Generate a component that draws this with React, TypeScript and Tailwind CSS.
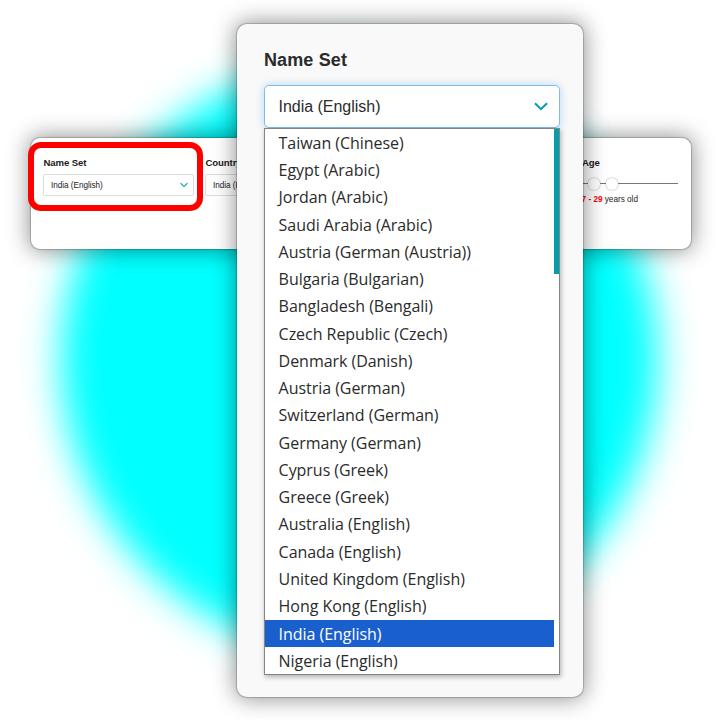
import React from "react";

const OPTIONS = [
  "Taiwan (Chinese)",
  "Egypt (Arabic)",
  "Jordan (Arabic)",
  "Saudi Arabia (Arabic)",
  "Austria (German (Austria))",
  "Bulgaria (Bulgarian)",
  "Bangladesh (Bengali)",
  "Czech Republic (Czech)",
  "Denmark (Danish)",
  "Austria (German)",
  "Switzerland (German)",
  "Germany (German)",
  "Cyprus (Greek)",
  "Greece (Greek)",
  "Australia (English)",
  "Canada (English)",
  "United Kingdom (English)",
  "Hong Kong (English)",
  "India (English)",
  "Nigeria (English)",
];

const SELECTED = "India (English)";

function Chevron({ className }: { className: string }) {
  return (
    <svg viewBox="0 0 14 9" className={className} fill="none" stroke="#009fae" strokeWidth="2">
      <path d="M1 1.2 L7 7.2 L13 1.2" />
    </svg>
  );
}

function SmallSelect({ label, value }: { label: string; value: string }) {
  return (
    <div className="w-[151px] shrink-0">
      <div className="h-[12px] whitespace-nowrap pl-[0.5px] text-[9.6px] font-bold leading-[13px] tracking-[-0.1px] text-[#222]">{label}</div>
      <div className="mt-[6px] flex h-[22px] items-center justify-between rounded-[2px] border border-[#dcdcdc] bg-white pr-[5px] pl-[7px]">
        <span className="whitespace-nowrap pt-px text-[8.2px] leading-[10px] tracking-[-0.04px] text-[#222]">{value}</span>
        <Chevron className="h-[6px] w-[8px] shrink-0" />
      </div>
    </div>
  );
}

function FilterBar() {
  return (
    <div className="z-[2] col-start-1 row-start-1 mt-[138px] ml-[31px] flex h-[111px] w-[660px] rounded-[9px] bg-white pt-[18px] pl-[12px] shadow-[0_0_22px_2px_rgba(0,0,0,0.42),0_0_1px_0.5px_rgba(0,0,0,0.2)]">
      <div className="flex w-[539px] shrink-0 gap-[11px]">
        <SmallSelect label="Name Set" value={SELECTED} />
        <SmallSelect label="Country" value={SELECTED} />
      </div>
      <div className="w-[96px]">
        <div className="h-[12px] text-[9.6px] font-bold leading-[13px] tracking-[-0.1px] text-[#222]">Age</div>
        <div className="mt-[9px] flex h-[13px] items-center">
          <div className="h-px w-[6px] bg-[#777]" />
          <div className="size-[12px] rounded-full bg-white shadow-[0_0_2px_rgba(0,0,0,0.4)]" />
          <div className="h-px w-[6px] bg-[#777]" />
          <div className="size-[12px] rounded-full bg-white shadow-[0_0_2px_rgba(0,0,0,0.4)]" />
          <div className="h-px grow bg-[#777]" />
        </div>
        <div className="mt-[4px] -ml-[5px] whitespace-nowrap text-[8.2px] leading-[11px] text-[#222]">
          <span className="font-bold text-[#f00]">17 - 29</span> years old
        </div>
      </div>
    </div>
  );
}

function NameSetCard() {
  return (
    <div className="z-10 col-start-1 row-start-1 mt-[24px] ml-[237px] h-[673px] w-[346px] rounded-[10px] bg-[#f9f9f9] pt-[25px] pl-[27px] shadow-[0_0_22px_2px_rgba(0,0,0,0.42),0_0_1px_0.5px_rgba(0,0,0,0.2)]">
      <div className="h-[22px] text-[18px] font-bold leading-[22px] tracking-[0.12px] text-[#2b2b2b]">Name Set</div>
      <div className="mt-[14px] flex h-[43px] w-[296px] items-center justify-between rounded-[5px] border border-[#7fbdf0] bg-white pr-[11px] pl-[13.5px] shadow-[0_0_8px_rgba(110,185,245,0.5)]">
        <span className="text-[16px] leading-[20px] tracking-[-0.02px] text-[#2b2b2b]">{SELECTED}</span>
        <Chevron className="h-[9px] w-[14px]" />
      </div>
      <div className="flex h-[547px] w-[296px] items-start border border-[#858585] bg-white shadow-[1px_2px_5px_rgba(0,0,0,0.3)]">
        <ul className="-mt-[0.25px] w-[289px] font-['Open_Sans',sans-serif] text-[16px] tracking-[-0.04px] text-[#2b2b2b]">
          {OPTIONS.map((name) => (
            <li
              key={name}
              className={
                name === SELECTED
                  ? "h-[27.28px] whitespace-nowrap bg-[#1a5fce] pl-[13.6px] leading-[28.4px] text-white"
                  : "h-[27.28px] whitespace-nowrap pl-[13.6px] leading-[28.4px]"
              }
            >
              {name}
            </li>
          ))}
        </ul>
        <div className="h-[145px] w-[5px] bg-[#009fae]" />
      </div>
    </div>
  );
}

export default function App() {
  return (
    <div className="grid h-[720px] w-[720px] grid-cols-1 grid-rows-1 items-start justify-items-start overflow-hidden bg-white font-['Liberation_Sans',Arial,sans-serif]">
      <div className="z-[1] col-start-1 row-start-1 mt-[60px] ml-[61px] size-[597px] rounded-full bg-[#00ffff] blur-[19px]" />
      <FilterBar />
      <div className="z-[5] col-start-1 row-start-1 mt-[142px] ml-[28px] h-[69px] w-[175px] rounded-[13px] border-[6px] border-[#f00]" />
      <NameSetCard />
    </div>
  );
}
